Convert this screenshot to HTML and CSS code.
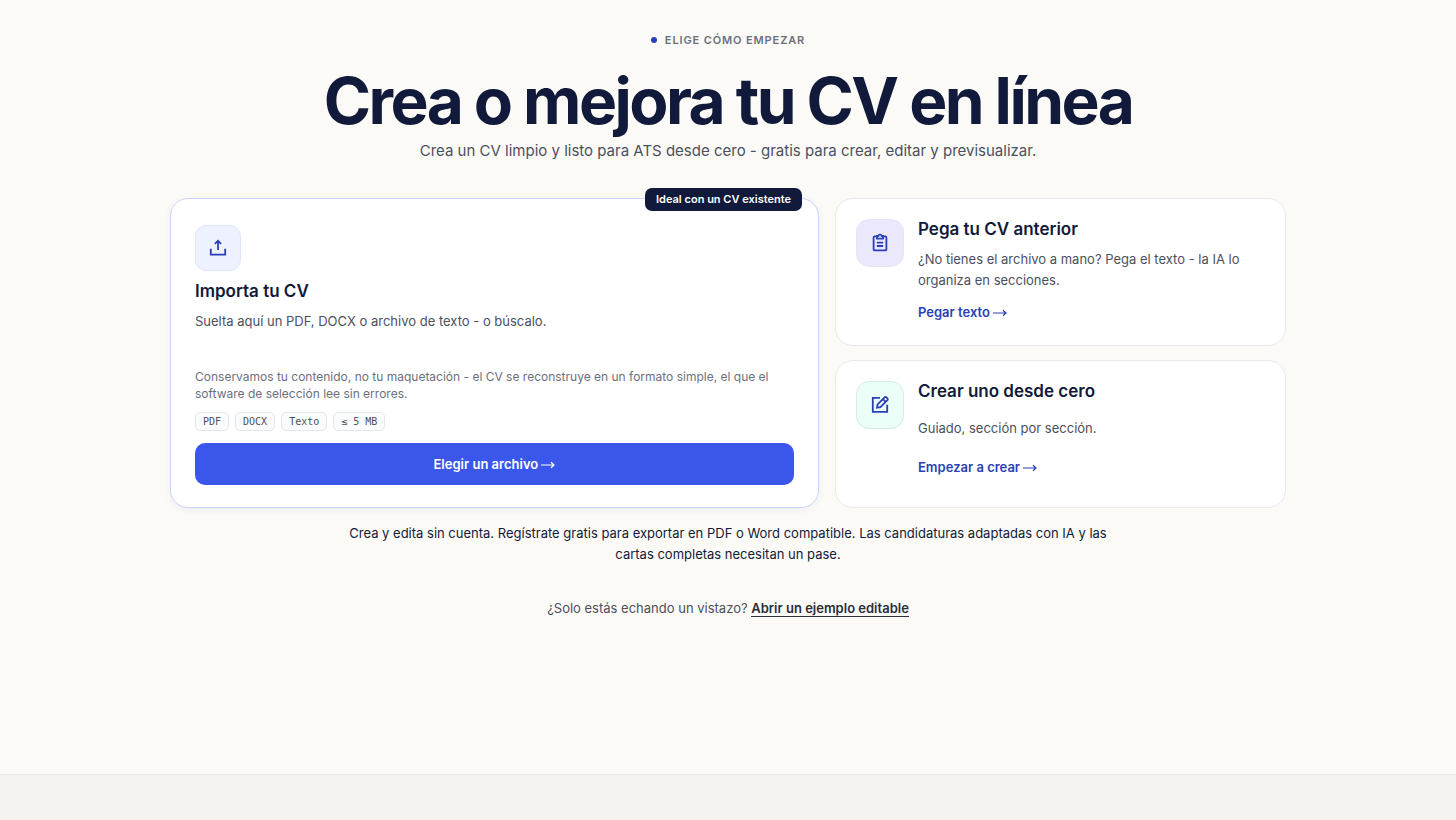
FILE: index.html
```html
<!DOCTYPE html>
<html lang="es">
<head>
  <meta charset="UTF-8">
  <meta name="viewport" content="width=device-width, initial-scale=1.0">
  <title>Crea o mejora tu CV en línea</title>
  <link rel="stylesheet" href="styles.css">
</head>
<body>
  <main class="start">
    <header class="intro">
      <p class="eyebrow"><span class="dot"></span>Elige cómo empezar</p>
      <h1>Crea o mejora tu CV en línea</h1>
      <p class="lead">Crea un CV limpio y listo para ATS desde cero - gratis para crear, editar y previsualizar.</p>
    </header>

    <div class="options">
      <section class="card card-import">
        <span class="badge">Ideal con un CV existente</span>
        <div class="icon icon-import">
          <svg viewBox="0 0 20 20" width="20" height="20" aria-hidden="true">
            <path d="M10 12V3.2M6.9 5.8L10 2.7l3.1 3.1M2.8 10.8v5.9h14.4v-5.9"/>
          </svg>
        </div>
        <h2>Importa tu CV</h2>
        <p class="text">Suelta aquí un PDF, DOCX o archivo de texto - o búscalo.</p>
        <p class="note">Conservamos tu contenido, no tu maquetación - el CV se reconstruye en un formato simple, el que el software de selección lee sin errores.</p>
        <ul class="formats">
          <li>PDF</li>
          <li>DOCX</li>
          <li>Texto</li>
          <li>≤ 5 MB</li>
        </ul>
        <button type="button" class="upload">Elegir un archivo <svg class="arrow" viewBox="0 0 14 8" width="14" height="8" aria-hidden="true"><path d="M0 4h13M10 1.2L13 4l-3 2.8"/></svg></button>
      </section>

      <div class="side">
        <section class="card card-small">
          <div class="icon icon-paste">
            <svg viewBox="0 0 20 20" width="20" height="20" aria-hidden="true">
              <path d="M7 3.4H4.6a1 1 0 0 0-1 1v12a1 1 0 0 0 1 1h10.8a1 1 0 0 0 1-1v-12a1 1 0 0 0-1-1H13"/>
              <path d="M7 3h1.2a1.9 1.9 0 0 1 3.6 0H13v2.6H7zM6.8 9.6h6.4M6.8 13h6.4"/>
            </svg>
          </div>
          <div class="body">
            <h2>Pega tu CV anterior</h2>
            <p class="text">¿No tienes el archivo a mano? Pega el texto - la IA lo organiza en secciones.</p>
            <a class="action" href="#pegar">Pegar texto <svg class="arrow" viewBox="0 0 14 8" width="14" height="8" aria-hidden="true"><path d="M0 4h13M10 1.2L13 4l-3 2.8"/></svg></a>
          </div>
        </section>
        <section class="card card-small">
          <div class="icon icon-create">
            <svg viewBox="0 0 20 20" width="20" height="20" aria-hidden="true">
              <path d="M10 2.8H2.8v14h14.4v-7"/>
              <path d="M7 12.6l.6-3.2 7-7a1.3 1.3 0 0 1 1.9 0l.9.9a1.3 1.3 0 0 1 0 1.9l-7 7zM13 4.2l2.6 2.6"/>
            </svg>
          </div>
          <div class="body">
            <h2>Crear uno desde cero</h2>
            <p class="text">Guiado, sección por sección.</p>
            <a class="action" href="#crear">Empezar a crear <svg class="arrow" viewBox="0 0 14 8" width="14" height="8" aria-hidden="true"><path d="M0 4h13M10 1.2L13 4l-3 2.8"/></svg></a>
          </div>
        </section>
      </div>
    </div>

    <p class="terms">Crea y edita sin cuenta. Regístrate gratis para exportar en PDF o Word compatible. Las candidaturas adaptadas con IA y las cartas completas necesitan un pase.</p>
    <p class="sample">¿Solo estás echando un vistazo? <a href="#ejemplo">Abrir un ejemplo editable</a></p>
  </main>
  <div class="next"></div>
</body>
</html>
```

FILE: styles.css
```css
* {
  box-sizing: border-box;
}
body {
  margin: 0;
  min-height: 100vh;
  display: flex;
  flex-direction: column;
  font-family: Inter, sans-serif;
  color: #111a3a;
  background: #fcfaf6;
}
h1, h2, p, ul {
  margin: 0;
}
.start {
  width: 100%;
  max-width: 1164px;
  margin: 0 auto;
  padding: 32px 24px 155px;
}
.intro {
  text-align: center;
}
.eyebrow {
  display: flex;
  justify-content: center;
  align-items: center;
  gap: 8px;
  font-size: 11px;
  line-height: 16px;
  font-weight: 600;
  letter-spacing: 0.08em;
  text-transform: uppercase;
  color: #6b7080;
}
.dot {
  width: 6px;
  height: 6px;
  border-radius: 50%;
  background: #2b3fb8;
}
h1 {
  margin-top: 20px;
  font-size: 64px;
  line-height: 66px;
  font-weight: 700;
  letter-spacing: -0.04em;
}
.lead {
  margin-top: 5px;
  font-size: 15px;
  line-height: 24px;
  color: #4b5060;
}
.options {
  display: grid;
  grid-template-columns: 59fr 41fr;
  gap: 16px;
  margin-top: 35px;
}
.side {
  display: grid;
  grid-auto-rows: 1fr;
  gap: 14px;
}
.card {
  background: #fff;
  border: 1px solid #e9e9ec;
  border-radius: 18px;
}
.card-import {
  position: relative;
  display: flex;
  flex-direction: column;
  padding: 26px 24px 22px;
  border-color: #cdd3fa;
  box-shadow: 0 2px 6px rgba(59, 86, 235, 0.08);
}
.badge {
  position: absolute;
  top: -11px;
  right: 16px;
  padding: 0 11px;
  font-size: 11px;
  line-height: 23px;
  font-weight: 600;
  color: #fff;
  background: #111a3a;
  border-radius: 7px;
}
.icon {
  display: flex;
  justify-content: center;
  align-items: center;
  flex: none;
  width: 48px;
  height: 48px;
  border: 1px solid #e6e4f8;
  border-radius: 13px;
}
.icon svg,
.arrow {
  fill: none;
  stroke: #2b3fb8;
  stroke-width: 1.8;
}
.icon-import {
  width: 46px;
  height: 46px;
  margin-bottom: 10px;
  border-color: #e2e6fa;
  border-radius: 11px;
  background: #eef1ff;
}
.icon-paste {
  background: #ebe8fc;
}
.icon-create {
  border-color: #d5ede5;
  background: #ecfef8;
}
h2 {
  font-size: 17px;
  line-height: 21px;
  font-weight: 600;
}
.text {
  font-size: 13px;
  line-height: 21px;
  color: #4b5060;
}
.card-import .text {
  margin-top: 9px;
}
.note {
  margin-top: auto;
  font-size: 12px;
  line-height: 17px;
  color: #6b7080;
}
.formats {
  display: flex;
  flex-wrap: wrap;
  gap: 6px;
  margin: 10px 0 12px;
  padding: 0;
  list-style: none;
}
.formats li {
  padding: 0 7px;
  font-family: "DejaVu Sans Mono", monospace;
  font-size: 10px;
  line-height: 17px;
  color: #4b5060;
  background: #fafbfc;
  border: 1px solid #e6e7ec;
  border-radius: 5px;
}
.upload {
  height: 42px;
  border: 0;
  border-radius: 10px;
  font-family: inherit;
  font-size: 13px;
  font-weight: 600;
  color: #fff;
  background: #3b56eb;
  cursor: pointer;
}
.arrow {
  stroke: currentColor;
  stroke-width: 1.2;
}
.card-small {
  display: flex;
  gap: 14px;
  padding: 20px;
}
.body {
  display: grid;
  flex: 1;
  row-gap: 9px;
  align-items: start;
}
.action {
  justify-self: start;
  margin-bottom: 1px;
  font-size: 13px;
  line-height: 24px;
  font-weight: 600;
  color: #2b3fb8;
  text-decoration: none;
}
.terms {
  max-width: 760px;
  margin: 15px auto 0;
  font-size: 13px;
  line-height: 21px;
  text-align: center;
}
.sample {
  margin-top: 33px;
  font-size: 13px;
  line-height: 21px;
  text-align: center;
  color: #4b5060;
}
.sample a {
  font-weight: 600;
  color: #2a2e3a;
  text-decoration: none;
  border-bottom: 1px solid #2a2e3a;
}
.next {
  flex: 1;
  min-height: 46px;
  border-top: 1px solid #ebeae6;
  background: #f4f3ef;
}
```
